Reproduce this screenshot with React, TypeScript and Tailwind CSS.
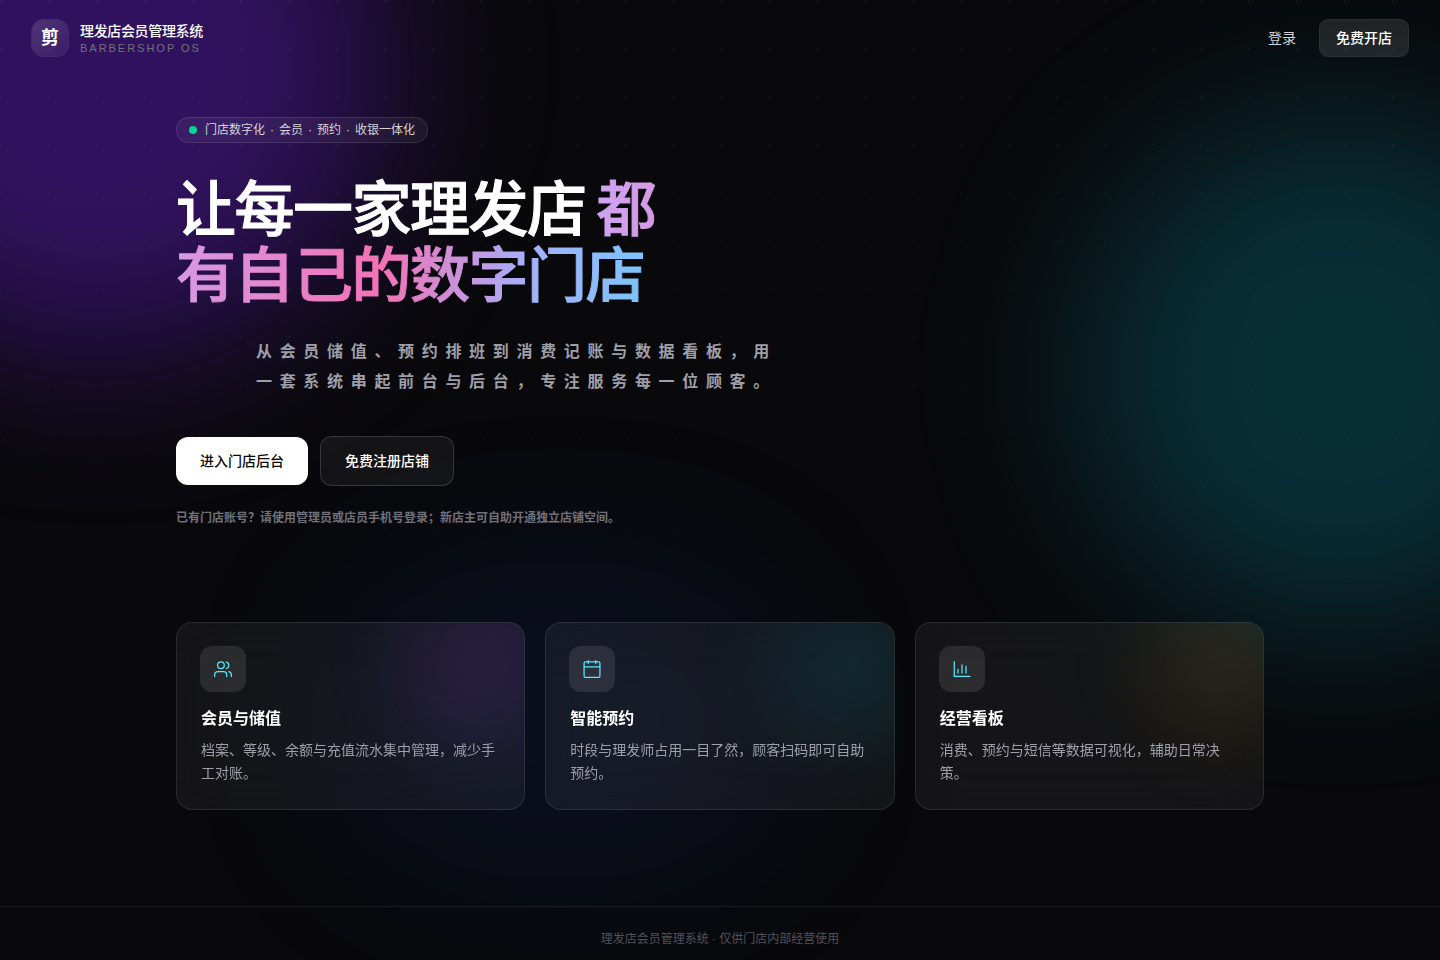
import React from 'react';

type Feature = {
  title: string;
  text: string;
  glow: string;
  icon: React.ReactNode;
};

const iconProps = {
  viewBox: "0 0 24 24",
  fill: "none",
  stroke: "currentColor",
  strokeWidth: 1.5,
  strokeLinecap: "round" as const,
  strokeLinejoin: "round" as const,
  className: "size-5",
  "aria-hidden": true,
};

const tags = ["门店数字化", "会员", "预约", "收银一体化"];

const features: Feature[] = [
  {
    title: "会员与储值",
    text: "档案、等级、余额与充值流水集中管理，减少手工对账。",
    glow: "bg-purple-500/12",
    icon: (
      <svg {...iconProps}>
        <path d="M16.500 21v-2a4 4 0 0 0-4-4H6a4 4 0 0 0-4 4v2" />
        <circle cx="9.500" cy="7.500" r="4" />
        <path d="M22 21v-2a4 4 0 0 0-3-3.870" />
        <path d="M16 3.630a4 4 0 0 1 0 7.750" />
      </svg>
    ),
  },
  {
    title: "智能预约",
    text: "时段与理发师占用一目了然，顾客扫码即可自助预约。",
    glow: "bg-cyan-500/12",
    icon: (
      <svg {...iconProps}>
        <rect x="2.500" y="3.500" width="19" height="18.500" rx="1.500" />
        <path d="M2.500 9.500h19M7.500 2v3.500M16.500 2v3.500" />
      </svg>
    ),
  },
  {
    title: "经营看板",
    text: "消费、预约与短信等数据可视化，辅助日常决策。",
    glow: "bg-amber-500/8",
    icon: (
      <svg {...iconProps}>
        <path d="M2.700 3v17.700h18.800" />
        <path d="M7.200 16.800v-4.500M12 16.800V7M16.800 16.800V8.800" />
      </svg>
    ),
  },
];

function Background() {
  return (
    <div aria-hidden="true" className="absolute inset-0 -z-10 overflow-hidden">
      <div className="absolute -left-48 -top-56 size-[580px] rounded-full bg-violet-600/34 blur-[80px]" />
      <div className="absolute -right-40 top-28 size-[520px] rounded-full bg-[#06b6d4]/21 blur-[80px]" />
      <div className="absolute left-80 top-[560px] h-[320px] w-[480px] rounded-full bg-blue-600/8 blur-[80px]" />
      <div className="absolute inset-0 bg-[radial-gradient(circle_at_1px_1px,rgba(255,255,255,0.05)_1px,transparent_0)] mask-[linear-gradient(to_bottom,black,transparent_80%)] bg-[size:48px_48px]" />
    </div>
  );
}

function FeatureCard({ feature }: { feature: Feature }) {
  return (
    <article className="relative overflow-hidden rounded-2xl border border-white/10 bg-white/5 p-6 backdrop-blur-xl">
      <div className={`absolute -right-10 -top-10 size-40 rounded-full blur-2xl ${feature.glow}`} />
      <div className="relative -ml-px -mt-px flex size-[46px] items-center justify-center rounded-xl bg-white/10 text-cyan-300">
        {feature.icon}
      </div>
      <h2 className="relative mt-[13px] text-base leading-7 font-semibold text-white">{feature.title}</h2>
      <p className="relative mt-1.5 text-sm leading-[23px] text-zinc-400">{feature.text}</p>
    </article>
  );
}

function App() {
  return (
    <div className="relative isolate flex min-h-screen flex-col bg-[#09090b] font-['Liberation_Sans','Noto_Sans_CJK_SC',sans-serif] text-white" lang="zh-CN">
      <Background />

      <header className="flex items-center justify-between px-8 py-5">
        <a href="#" className="flex items-center gap-3">
          <span className="flex size-9 items-center justify-center rounded-xl bg-linear-to-br from-white/15 to-white/5 text-lg font-bold ring-1 ring-white/10">剪</span>
          <span className="flex flex-col">
            <span className="text-sm leading-[19px] font-medium tracking-tight">理发店会员管理系统</span>
            <span className="text-[11px] leading-[14px] tracking-[0.18em] text-zinc-500">BARBERSHOP OS</span>
          </span>
        </a>
        <nav className="flex items-center gap-6">
          <a href="#login" className="text-sm text-zinc-300">登录</a>
          <a href="#register" className="rounded-lg bg-white/10 px-4 py-2 text-sm font-medium ring-1 ring-white/15">免费开店</a>
        </nav>
      </header>

      <main className="mx-auto w-full max-w-[1136px] flex-1 px-6 pt-[41px] pb-24">
        <section>
          <p className="flex w-fit items-center gap-2 rounded-full border border-white/10 bg-white/5 px-3 py-1 text-xs text-zinc-300">
            <span className="size-2 rounded-full bg-emerald-400" />
            <span className="flex gap-[5px]">
              {tags.map((tag, i) => (
                <React.Fragment key={tag}>
                  {i > 0 && <span>·</span>}
                  <span>{tag}</span>
                </React.Fragment>
              ))}
            </span>
          </p>
          <h1 className="mt-[35px] max-w-[600px] text-6xl leading-[66px] font-medium tracking-tight [-webkit-text-stroke:1px]">
            让每一家理发店
            <span className="ml-[11px] bg-[linear-gradient(90deg,#cda4f2,#f472b6_50%,#a5b0fb_78%,#7cc4fb)] bg-clip-text text-transparent">
              都<br />有自己的数字门店
            </span>
          </h1>
          <p className="mt-[27px] max-w-[604px] pl-20 text-base leading-[30px] font-bold tracking-[0.48em] text-zinc-400">
            从会员储值、预约排班到消费记账与数据看板，用一套系统串起前台与后台，专注服务每一位顾客。
          </p>
          <div className="mt-[39px] flex flex-wrap items-center gap-3">
            <a href="#login" className="rounded-xl bg-white px-6 py-3.5 text-sm font-medium text-zinc-950">进入门店后台</a>
            <a href="#register" className="rounded-xl border border-white/15 bg-white/5 px-6 py-3.5 text-sm font-medium">免费注册店铺</a>
          </div>
          <p className="mt-6 text-xs font-bold text-zinc-500">
            已有门店账号？请使用管理员或店员手机号登录；新店主可自助开通独立店铺空间。
          </p>
        </section>

        <section className="mt-24 grid gap-5 md:grid-cols-3">
          {features.map((feature) => (
            <FeatureCard key={feature.title} feature={feature} />
          ))}
        </section>
      </main>

      <footer className="border-t border-white/8 py-6 text-center text-xs text-zinc-600">
        理发店会员管理系统 · 仅供门店内部经营使用
      </footer>
    </div>
  );
}

export default App;
